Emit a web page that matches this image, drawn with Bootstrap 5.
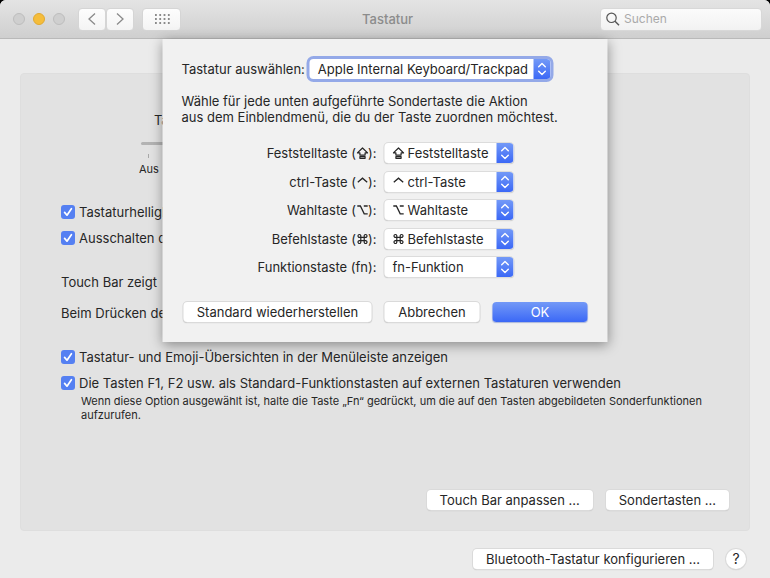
<!DOCTYPE html>
<html lang="de">
<head>
<meta charset="utf-8">
<meta name="viewport" content="width=device-width, initial-scale=1">
<title>Tastatur</title>
<link href="https://cdn.jsdelivr.net/npm/bootstrap@5.3.0/dist/css/bootstrap.min.css" rel="stylesheet">
<style>
body{font-family:Inter,"DejaVu Sans",sans-serif;font-size:13px;line-height:16px;color:#262626;background:#000}
.window{min-height:100vh;background:#ebebeb;border-radius:6px 6px 0 0;overflow:hidden}
.titlebar{grid-template-columns:1fr auto 1fr;height:39px;background:linear-gradient(#e4e4e4,#cfcfcf);border-bottom:1px solid #b9b9b9;padding:0 8px 0 13px}
.title-text{color:#8c8c8c;font-weight:500;font-size:13px;line-height:16px}
.lights{gap:8px;margin-right:13px}
.light{width:12px;height:12px;border-radius:50%;border:1px solid #bdbdbd;background:#cfcfcf;padding:0}
.light-min{background:#f5bd3b;border-color:#e0a932}
.tool{height:23px;border:1px solid #d5d5d5;background:linear-gradient(#fdfdfd,#f4f4f4);border-radius:4px;padding:0;display:flex;align-items:center;justify-content:center}
.tool-nav{width:28px}
.tool-grid{width:39px;margin-left:8px}
.search{width:162px;height:23px;background:linear-gradient(#fbfbfb,#f2f2f2);border:1px solid #d8d8d8;border-radius:4px;padding:0 5px;gap:4px}
.search input{border:0;background:transparent;outline:0;min-width:0;padding:0;font-size:12px;line-height:16px}
.search input::placeholder{color:#aaa;opacity:1}
.panel{background:#e2e2e2;border:1px solid #dedede;border-radius:4px;margin:34px 20px 0;padding:38px 20px 20px 40px}
.slider-group{width:180px;margin-left:78px}
.slider-group label{padding-left:15px;display:block}
.slider-group input{appearance:none;width:100%;height:3px;background:#b3b3b3;margin:14px 0 0 2px;border-radius:2px;display:block}
.tick{width:1px;height:4px;background:#a8a8a8;margin:9px 0 0 9px}
.fine{font-size:11px;line-height:14px}
.note{margin:3px 0 0 20px}
.checks{gap:10px}
.checks-top{margin-top:28px}
.line-one{margin-top:28px}
.line-two{margin-top:15px}
.checks-bottom{margin-top:28px}
.check-row{gap:4px}
.check-row input{appearance:none;flex:none;width:14px;height:14px;margin:0;border-radius:3px;background:#5580f2 url("data:image/svg+xml,%3Csvg xmlns='http://www.w3.org/2000/svg' viewBox='0 0 14 14'%3E%3Cpath d='M3.6 7.4 6 10.2 10.4 3.7' fill='none' stroke='white' stroke-width='1.7' stroke-linecap='round' stroke-linejoin='round'/%3E%3C/svg%3E")}
.push{height:20px;border:0;border-radius:4px;background:#fff;box-shadow:0 0 0 1px #dadada,0 1px 1px #b8b8b8;padding:0 13px;line-height:20px;color:#262626;white-space:nowrap}
.push-main{background:linear-gradient(#7399f7,#3b68f6);color:#fff;box-shadow:0 1px 1px #aab6da}
.push-row{gap:13px}
.answers{gap:13px;margin-top:25px;padding-left:2px}
.answer{width:95px}
.help{width:20px;border-radius:50%;padding:0;font-size:14px}
.foot{gap:13px;padding:18px 24px 9px}
.sheet{width:445px;top:39px;background:#f1f1f1;padding:20px 20px 20px 19px;box-shadow:0 3px 12px rgba(0,0,0,.4)}
.choose{gap:5px}
.intro{margin:14px 0 18px}
.popup{height:20px;border-radius:4px;box-shadow:0 0 0 1px #dcdcdc,0 1px 1px #b5b5b5;background:#fff;overflow:hidden}
.popup select{appearance:none;border:0;outline:0;background:transparent;height:20px;min-width:0;padding:0 0 0 8px;color:#262626;line-height:20px}
.popup .key-icon{margin-left:8px}
.popup .key-icon + select{padding-left:3px}
.popup .arrows{width:17px;flex:none;background:linear-gradient(#7399f7,#3b68f6)}
.popup-key{width:129px}
.popup-focus{width:241px;box-shadow:0 0 0 3px #94a9e8}
.key-rows{height:134px}
.key-rows label{width:195px}
.block-icon{display:block}
.key-icon{flex:none;width:12px;height:12px;fill:none;stroke:#262626;stroke-width:1.3}
label .key-icon{display:inline-block;vertical-align:-1px}
</style>
<script src="https://cdn.jsdelivr.net/npm/bootstrap@5.3.0/dist/js/bootstrap.bundle.min.js"></script>
</head>
<body>
<svg width="0" height="0" class="position-absolute" aria-hidden="true">
  <symbol id="arrows" viewBox="0 0 17 20"><path d="M5.200 7.700 8.500 4.500l3.300 3.200M5.200 12.300l3.300 3.200 3.300-3.200" fill="none" stroke="#fff" stroke-width="1.400" stroke-linecap="round" stroke-linejoin="round"/></symbol>
  <symbol id="caps" viewBox="0 0 12 12"><path d="M6 1 .9 5.900h2.500v2.200h5.200V5.900h2.500ZM3.400 9.600h5.200v1.700H3.400Z" stroke-width="1.200" stroke-linejoin="round"/></symbol>
  <symbol id="ctrl" viewBox="0 0 12 12"><path d="M1.300 6.300 6 2.200l4.700 4.100"/></symbol>
  <symbol id="alt" viewBox="0 0 12 12"><path d="M.8 2h3.100l3.800 7.800h3.500M7.300 2h3.900"/></symbol>
  <symbol id="cmd" viewBox="0 0 12 12"><path d="M4.300 4.300H3A1.400 1.400 0 1 1 4.300 3v6A1.400 1.400 0 1 1 3 7.700h6A1.400 1.400 0 1 1 7.700 9V3A1.400 1.400 0 1 1 9 4.300Z" stroke-width="1.200"/></symbol>
</svg>
<div class="window d-flex flex-column position-relative">
  <header class="titlebar d-grid align-items-center">
    <div class="d-flex align-items-center">
      <div class="lights d-flex"><button class="light" aria-label="Schließen"></button><button class="light light-min" aria-label="Minimieren"></button><button class="light" aria-label="Zoomen"></button></div>
      <button class="tool tool-nav" aria-label="Zurück"><svg width="10" height="14" class="block-icon"><path d="M8 1.500 2 7l6 5.500" fill="none" stroke="#8a8a8a" stroke-width="1.300"/></svg></button>
      <button class="tool tool-nav" aria-label="Vorwärts"><svg width="10" height="14" class="block-icon"><path d="m2 1.500 6 5.500-6 5.500" fill="none" stroke="#8a8a8a" stroke-width="1.300"/></svg></button>
      <button class="tool tool-grid" aria-label="Alle einblenden"><svg width="16" height="12" class="block-icon"><path d="M1 2h15M1 6h15M1 10h15" stroke="#8a8a8a" stroke-width="1.800" stroke-dasharray="1.800 2.500"/></svg></button>
    </div>
    <h1 class="title-text m-0">Tastatur</h1>
    <div class="search d-flex align-items-center ms-auto">
      <svg width="14" height="14" class="block-icon flex-shrink-0"><circle cx="5.500" cy="5.800" r="4.700" fill="none" stroke="#555" stroke-width="1.200"/><path d="m9 9.300 4 4" stroke="#555" stroke-width="1.400"/></svg>
      <input type="search" placeholder="Suchen" aria-label="Suchen">
    </div>
  </header>

  <main class="panel d-flex flex-column flex-grow-1">
    <div class="slider-group">
      <label for="light">Ta</label>
      <input id="light" type="range">
      <div class="tick"></div>
      <div class="fine mt-1">Aus</div>
    </div>
    <div class="checks checks-top d-flex flex-column">
      <div class="check-row d-flex align-items-center"><input type="checkbox" id="c1" checked><label for="c1">Tastaturhelligk</label></div>
      <div class="check-row d-flex align-items-center"><input type="checkbox" id="c2" checked><label for="c2">Ausschalten d</label></div>
    </div>
    <div class="line-one">Touch Bar zeigt</div>
    <div class="line-two">Beim Drücken de</div>
    <div class="checks checks-bottom d-flex flex-column">
      <div class="check-row d-flex align-items-center"><input type="checkbox" id="c3" checked><label for="c3">Tastatur- und Emoji-Übersichten in der Menüleiste anzeigen</label></div>
      <div class="check-row d-flex align-items-center"><input type="checkbox" id="c4" checked><label for="c4">Die Tasten F1, F2 usw. als Standard-Funktionstasten auf externen Tastaturen verwenden</label></div>
    </div>
    <p class="fine note">Wenn diese Option ausgewählt ist, halte die Taste „Fn“ gedrückt, um die auf den Tasten abgebildeten Sonderfunktionen aufzurufen.</p>
    <div class="push-row d-flex justify-content-end mt-auto"><button class="push">Touch Bar anpassen ...</button><button class="push">Sondertasten ...</button></div>
  </main>
  <footer class="foot d-flex justify-content-end"><button class="push">Bluetooth-Tastatur konfigurieren ...</button><button class="push help" aria-label="Hilfe">?</button></footer>

  <section class="sheet position-absolute start-50 translate-middle-x" role="dialog" aria-label="Sondertasten">
    <div class="choose d-flex align-items-center"><label for="kb">Tastatur auswählen:</label>
      <div class="popup popup-focus d-flex"><select id="kb" class="flex-grow-1"><option>Apple Internal Keyboard/Trackpad</option></select><span class="arrows"><svg width="17" height="20" class="block-icon"><use href="#arrows"/></svg></span></div></div>
    <p class="intro">Wähle für jede unten aufgeführte Sondertaste die Aktion<br>aus dem Einblendmenü, die du der Taste zuordnen möchtest.</p>
    <div class="key-rows d-flex flex-column justify-content-between">
      <div class="d-flex align-items-center gap-2"><label for="k1" class="text-end">Feststelltaste (<svg class="key-icon"><use href="#caps"/></svg>):</label><div class="popup popup-key d-flex align-items-center"><svg class="key-icon"><use href="#caps"/></svg><select id="k1" class="flex-grow-1"><option>Feststelltaste</option></select><span class="arrows"><svg width="17" height="20" class="block-icon"><use href="#arrows"/></svg></span></div></div>
      <div class="d-flex align-items-center gap-2"><label for="k2" class="text-end">ctrl-Taste (<svg class="key-icon"><use href="#ctrl"/></svg>):</label><div class="popup popup-key d-flex align-items-center"><svg class="key-icon"><use href="#ctrl"/></svg><select id="k2" class="flex-grow-1"><option>ctrl-Taste</option></select><span class="arrows"><svg width="17" height="20" class="block-icon"><use href="#arrows"/></svg></span></div></div>
      <div class="d-flex align-items-center gap-2"><label for="k3" class="text-end">Wahltaste (<svg class="key-icon"><use href="#alt"/></svg>):</label><div class="popup popup-key d-flex align-items-center"><svg class="key-icon"><use href="#alt"/></svg><select id="k3" class="flex-grow-1"><option>Wahltaste</option></select><span class="arrows"><svg width="17" height="20" class="block-icon"><use href="#arrows"/></svg></span></div></div>
      <div class="d-flex align-items-center gap-2"><label for="k4" class="text-end">Befehlstaste (<svg class="key-icon"><use href="#cmd"/></svg>):</label><div class="popup popup-key d-flex align-items-center"><svg class="key-icon"><use href="#cmd"/></svg><select id="k4" class="flex-grow-1"><option>Befehlstaste</option></select><span class="arrows"><svg width="17" height="20" class="block-icon"><use href="#arrows"/></svg></span></div></div>
      <div class="d-flex align-items-center gap-2"><label for="k5" class="text-end">Funktionstaste (fn):</label><div class="popup popup-key d-flex align-items-center"><select id="k5" class="flex-grow-1"><option>fn-Funktion</option></select><span class="arrows"><svg width="17" height="20" class="block-icon"><use href="#arrows"/></svg></span></div></div>
    </div>
    <div class="answers d-flex"><button class="push flex-grow-1">Standard wiederherstellen</button><button class="push answer">Abbrechen</button><button class="push push-main answer">OK</button></div>
  </section>
</div>
</body>
</html>
